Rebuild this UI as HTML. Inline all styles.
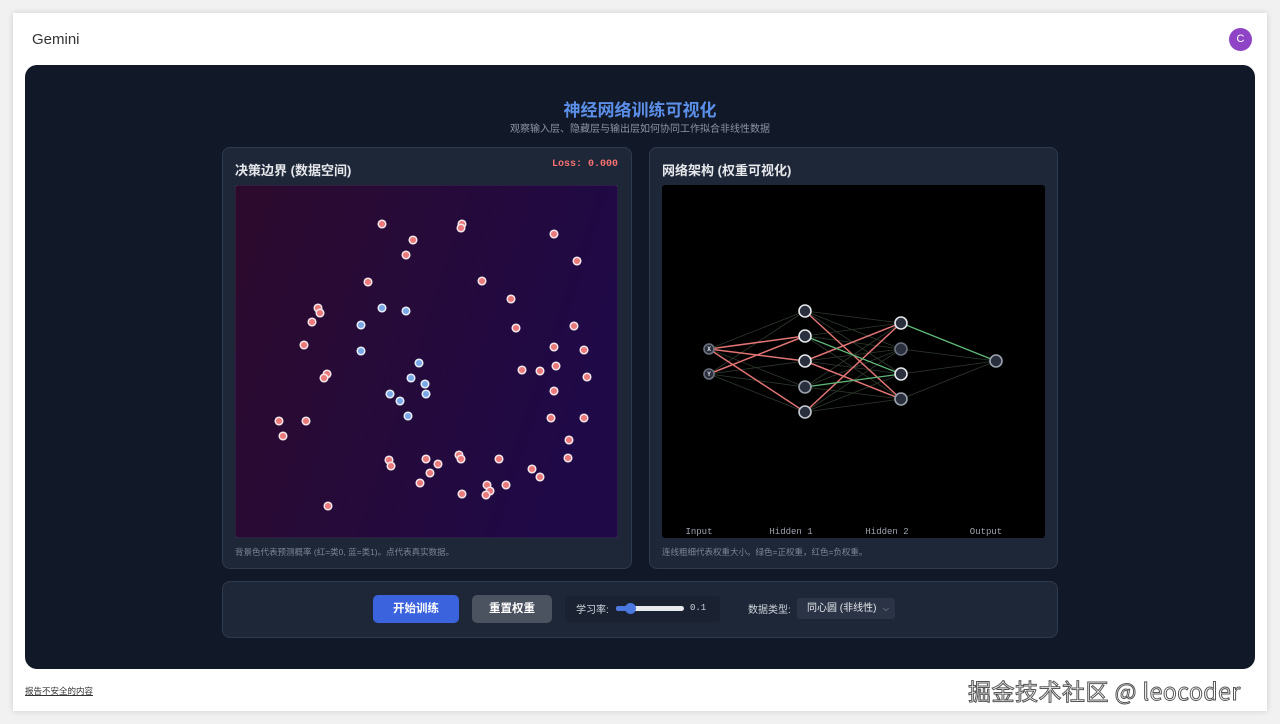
<!DOCTYPE html>
<html><head><meta charset="utf-8"><style>
body{margin:0;width:1280px;height:724px;background:#f1f1f1;font-family:"Liberation Sans","Noto Sans CJK SC",sans-serif;position:relative;overflow:hidden}
.card{position:absolute;left:13px;top:13px;width:1254px;height:698px;background:#fff;box-shadow:0 0 6px rgba(0,0,0,.15)}
.gem{position:absolute;left:32px;top:31px;font-size:15px;color:#333}
.av{position:absolute;left:1229px;top:28px;width:23px;height:23px;border-radius:50%;background:#8e44c4;color:#fff;font-size:11px;text-align:center;line-height:23px}
.dark{position:absolute;left:25px;top:65px;width:1230px;height:604px;background:#111827;border-radius:12px}
.t1{position:absolute;left:0;width:1280px;top:96px;text-align:center;color:#5b8fe8;font-size:17px;font-weight:bold}
.t2{position:absolute;left:0;width:1280px;top:120px;text-align:center;color:#8b95a5;font-size:10px}
.pan{position:absolute;background:#1e2738;border:1px solid #2e3a4d;border-radius:8px}
.h{position:absolute;color:#e5e7eb;font-size:13px;font-weight:bold}
.cap{position:absolute;color:#7b8494;font-size:8.5px}
.mono{font-family:"Liberation Mono",monospace}
.btn{position:absolute;top:595px;height:28px;border-radius:5px;color:#fff;font-size:11.5px;font-weight:bold;text-align:center;line-height:28px}
</style></head><body>
<div class="card"></div>
<div class="gem">Gemini</div>
<div class="av">C</div>
<div class="dark"></div>
<div class="t1">神经网络训练可视化</div>
<div class="t2">观察输入层、隐藏层与输出层如何协同工作拟合非线性数据</div>
<div class="pan" style="left:222px;top:147px;width:408px;height:420px"></div>
<div class="pan" style="left:649px;top:147px;width:407px;height:420px"></div>
<div class="h" style="left:235px;top:160px">决策边界 (数据空间)</div>
<div class="mono" style="position:absolute;left:552px;top:159px;color:#f87171;font-size:10px;font-weight:bold">Loss: 0.000</div>
<div class="h" style="left:662px;top:160px">网络架构 (权重可视化)</div>
<svg style="position:absolute;left:235px;top:185px" width="383" height="353">
<defs><linearGradient id="g" x1="0" x2="1" y1="0" y2="0.3"><stop offset="0" stop-color="#2c0a2c"/><stop offset="1" stop-color="#1f0946"/></linearGradient></defs>
<rect width="383" height="353" rx="3" fill="url(#g)" stroke="#3a3050"/>
<g transform="translate(-235,-185)" stroke="#f5e6ea" stroke-width="1.5" fill="#e9797a">
<circle cx="382" cy="224" r="3.8"/><circle cx="462" cy="224" r="3.8"/><circle cx="461" cy="228" r="3.8"/><circle cx="413" cy="240" r="3.8"/><circle cx="554" cy="234" r="3.8"/><circle cx="406" cy="255" r="3.8"/><circle cx="577" cy="261" r="3.8"/><circle cx="368" cy="282" r="3.8"/><circle cx="482" cy="281" r="3.8"/><circle cx="318" cy="308" r="3.8"/><circle cx="320" cy="313" r="3.8"/><circle cx="511" cy="299" r="3.8"/><circle cx="312" cy="322" r="3.8"/><circle cx="516" cy="328" r="3.8"/><circle cx="574" cy="326" r="3.8"/><circle cx="304" cy="345" r="3.8"/><circle cx="554" cy="347" r="3.8"/><circle cx="584" cy="350" r="3.8"/><circle cx="556" cy="366" r="3.8"/><circle cx="522" cy="370" r="3.8"/><circle cx="540" cy="371" r="3.8"/><circle cx="327" cy="374" r="3.8"/><circle cx="324" cy="378" r="3.8"/><circle cx="587" cy="377" r="3.8"/><circle cx="554" cy="391" r="3.8"/><circle cx="279" cy="421" r="3.8"/><circle cx="306" cy="421" r="3.8"/><circle cx="551" cy="418" r="3.8"/><circle cx="584" cy="418" r="3.8"/><circle cx="283" cy="436" r="3.8"/><circle cx="569" cy="440" r="3.8"/><circle cx="389" cy="460" r="3.8"/><circle cx="391" cy="466" r="3.8"/><circle cx="426" cy="459" r="3.8"/><circle cx="438" cy="464" r="3.8"/><circle cx="459" cy="455" r="3.8"/><circle cx="461" cy="459" r="3.8"/><circle cx="499" cy="459" r="3.8"/><circle cx="568" cy="458" r="3.8"/><circle cx="430" cy="473" r="3.8"/><circle cx="532" cy="469" r="3.8"/><circle cx="540" cy="477" r="3.8"/><circle cx="420" cy="483" r="3.8"/><circle cx="487" cy="485" r="3.8"/><circle cx="506" cy="485" r="3.8"/><circle cx="490" cy="491" r="3.8"/><circle cx="462" cy="494" r="3.8"/><circle cx="486" cy="495" r="3.8"/><circle cx="328" cy="506" r="3.8"/>
</g>
<g transform="translate(-235,-185)" stroke="#e8eef8" stroke-width="1.5" fill="#7aa8e6">
<circle cx="382" cy="308" r="3.8"/><circle cx="406" cy="311" r="3.8"/><circle cx="361" cy="325" r="3.8"/><circle cx="361" cy="351" r="3.8"/><circle cx="419" cy="363" r="3.8"/><circle cx="411" cy="378" r="3.8"/><circle cx="425" cy="384" r="3.8"/><circle cx="390" cy="394" r="3.8"/><circle cx="426" cy="394" r="3.8"/><circle cx="400" cy="401" r="3.8"/><circle cx="408" cy="416" r="3.8"/>
</g></svg>
<svg style="position:absolute;left:662px;top:185px" width="383" height="353">
<rect width="383" height="353" rx="3" fill="#000"/>
<g transform="translate(-662,-185)" fill="none">
<g stroke="#2e3a2e" stroke-width="0.8">
<path d="M709 349L805 311M709 349L805 387M709 374L805 311M709 374L805 361M709 374L805 387M709 374L805 412M805 311L901 323M805 311L901 349M805 311L901 374M805 336L901 323M805 336L901 349M805 336L901 399M805 361L901 349M805 361L901 374M805 387L901 323M805 387L901 349M805 387L901 399M805 412L901 349M805 412L901 374M805 412L901 399M901 374L996 361M901 399L996 361M901 349L996 361"/>
</g>
<g stroke="#e07474" stroke-width="1.5">
<path d="M709 349L805 336M709 349L805 361M709 349L805 412M709 374L805 336M805 311L901 399M805 361L901 323M805 361L901 399M805 412L901 323"/>
</g>
<g stroke="#5fb878" stroke-width="1.3">
<path d="M805 336L901 374M805 387L901 374M901 323L996 361"/>
</g>
<g fill="#2a2f3d" stroke-width="1.6">
<circle cx="805" cy="311" r="6" stroke="#e5e7eb"/><circle cx="805" cy="336" r="6" stroke="#e5e7eb"/><circle cx="805" cy="361" r="6" stroke="#e5e7eb"/><circle cx="805" cy="387" r="6" stroke="#9ca3af"/><circle cx="805" cy="412" r="6" stroke="#c5c9d0"/>
<circle cx="901" cy="323" r="6" stroke="#e5e7eb"/><circle cx="901" cy="349" r="6" stroke="#6b7280"/><circle cx="901" cy="374" r="6" stroke="#e5e7eb"/><circle cx="901" cy="399" r="6" stroke="#9ca3af"/>
<circle cx="996" cy="361" r="6" stroke="#9ca3af"/>
<circle cx="709" cy="349" r="5" stroke="#6b7280"/><circle cx="709" cy="374" r="5" stroke="#6b7280"/>
</g></g>
<g font-family="Liberation Mono,monospace" fill="#e5e7eb" font-size="6" text-anchor="middle" font-weight="bold"><text x="47" y="166">X</text><text x="47" y="191">Y</text></g>
<g font-family="Liberation Mono,monospace" fill="#9ca3af" font-size="9" text-anchor="middle"><text x="37" y="349">Input</text><text x="129" y="349">Hidden 1</text><text x="225" y="349">Hidden 2</text><text x="324" y="349">Output</text></g>
</svg>
<div class="cap" style="left:235px;top:546px">背景色代表预测概率 (红=类0, 蓝=类1)。点代表真实数据。</div>
<div class="cap" style="left:662px;top:546px">连线粗细代表权重大小。绿色=正权重，红色=负权重。</div>
<div class="pan" style="left:222px;top:581px;width:834px;height:55px"></div>
<div class="btn" style="left:373px;width:86px;background:#3b63dd">开始训练</div>
<div class="btn" style="left:472px;width:80px;background:#4b5260">重置权重</div>
<div style="position:absolute;left:565px;top:596px;width:155px;height:26px;background:#1a2232;border-radius:4px"></div>
<div style="position:absolute;left:576px;top:601px;color:#cfd4dc;font-size:10px">学习率:</div>
<div style="position:absolute;left:616px;top:606px;width:68px;height:5px;border-radius:3px;background:#e8eaee"></div>
<div style="position:absolute;left:616px;top:606px;width:14px;height:5px;border-radius:3px;background:#4a78e0"></div>
<div style="position:absolute;left:625px;top:603px;width:11px;height:11px;border-radius:50%;background:#4a78e0"></div>
<div class="mono" style="position:absolute;left:690px;top:603px;color:#cfd4dc;font-size:9px">0.1</div>
<div style="position:absolute;left:748px;top:601px;color:#cfd4dc;font-size:10px">数据类型:</div>
<div style="position:absolute;left:797px;top:598px;width:98px;height:21px;background:#2a3446;border-radius:3px;color:#e5e7eb;font-size:10px;line-height:21px;padding-left:10px;box-sizing:border-box">同心圆 (非线性) <span style="position:absolute;right:6px;font-size:8px;color:#aaa">⌵</span></div>
<div style="position:absolute;left:25px;top:685px;font-size:8.5px;color:#333;text-decoration:underline">报告不安全的内容</div>
<div style="position:absolute;left:968px;top:673px;font-size:23px;color:#fff;-webkit-text-stroke:1px #555;font-family:'Noto Sans CJK SC',sans-serif;letter-spacing:0.5px">掘金技术社区 @ leocoder</div>
</body></html>
